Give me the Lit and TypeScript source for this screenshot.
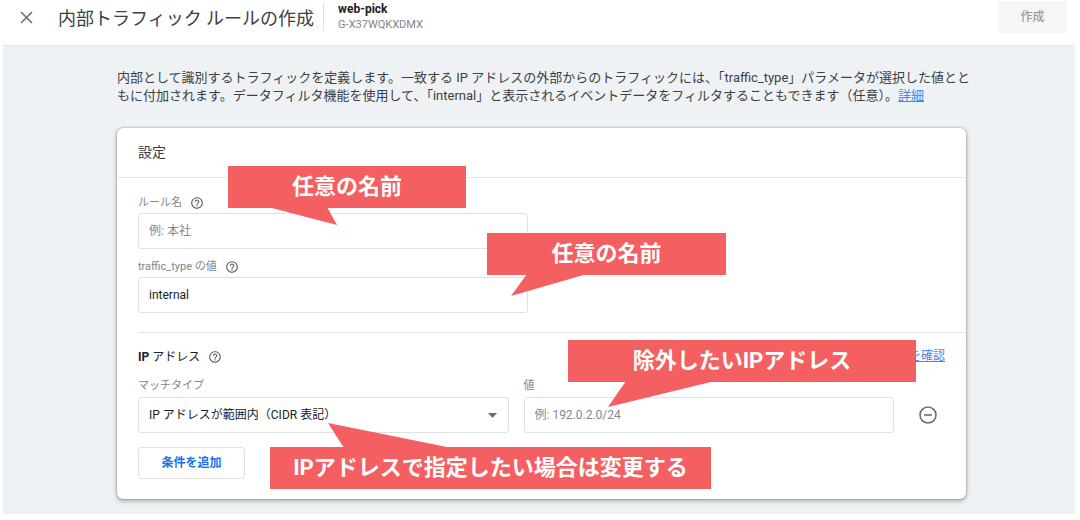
import { LitElement, html, css, svg } from "lit";
import { customElement, property } from "lit/decorators.js";

@customElement("help-button")
class HelpButton extends LitElement {
  @property() label = "ヘルプ";

  static styles = css`
    :host {
      display: inline-flex;
    }
    .help {
      display: flex;
      padding: 0;
      border: 0;
      background: none;
      color: #5f6368;
      cursor: pointer;
    }
  `;

  render() {
    return html`<button class="help" type="button" aria-label=${this.label}>
      <svg width="14" height="14" viewBox="0 0 24 24" fill="currentColor" aria-hidden="true">
        <path d="M11 18h2v-2h-2v2zm1-16C6.48 2 2 6.48 2 12s4.480 10 10 10 10-4.480 10-10S17.520 2 12 2zm0 18c-4.410 0-8-3.590-8-8s3.590-8 8-8 8 3.590 8 8-3.590 8-8 8zm0-14c-2.210 0-4 1.790-4 4h2c0-1.100.9-2 2-2s2 .9 2 2c0 2-3 1.750-3 5h2c0-2.250 3-2.500 3-5 0-2.210-1.790-4-4-4z"/>
      </svg>
    </button>`;
  }
}

@customElement("note-callout")
class NoteCallout extends LitElement {
  /** Tail outline, in pixels from the top left corner of the note. */
  @property() tail = "";

  static styles = css`
    :host {
      display: block;
      position: absolute;
      height: 42px;
      color: #fff;
      font-size: 22px;
      font-weight: 700;
      line-height: 42px;
      text-align: center;
      white-space: nowrap;
      background: #f45f61;
    }
    .tail {
      position: absolute;
      left: 0;
      top: 0;
      overflow: visible;
      pointer-events: none;
    }
  `;

  render() {
    return html`<svg class="tail" width="1" height="1" aria-hidden="true">
        ${svg`<polygon points=${this.tail} fill="#f45f61"></polygon>`}
      </svg>
      <slot></slot>`;
  }
}

@customElement("app-root")
class AppRoot extends LitElement {
  static styles = css`
    :host {
      display: block;
      padding: 0 5px 6px 3px;
      background: #fff;
      color: #3c4043;
      font-family: Roboto, "Noto Sans CJK JP", sans-serif;
      font-size: 12px;
      line-height: 18px;
    }
    * {
      box-sizing: border-box;
    }
    button,
    input,
    select {
      font: inherit;
    }
    a {
      color: #4285f4;
      text-decoration: underline;
    }
    .bar {
      display: flex;
      align-items: flex-start;
      height: 45px;
      padding: 0 8px 0 16px;
    }
    .close {
      display: flex;
      margin: 10px 24px 0 0;
      padding: 0;
      border: 0;
      background: none;
      color: #6b6e70;
    }
    .title {
      margin: 0;
      padding-top: 7px;
      font-size: 18px;
      font-weight: 400;
      line-height: 24px;
      white-space: nowrap;
    }
    .property {
      margin: 2px 0 0 9px;
      padding-left: 14px;
      border-left: 1px solid #dfe1e3;
      height: 29px;
    }
    .name,
    .id {
      margin: 0;
      line-height: 15px;
    }
    .name {
      color: #202124;
      font-weight: 700;
    }
    .id {
      color: #80868b;
      font-size: 11px;
    }
    .create {
      width: 69px;
      height: 32px;
      margin: 1px 0 0 auto;
      border: 0;
      border-radius: 3px;
      background: #f6f6f6;
      color: #9b9c9d;
      font-weight: 500;
    }
    .page {
      padding: 23px 109px 15px 114px;
      border-top: 1px solid #e3e7e9;
      background: #eef2f4;
    }
    .intro {
      margin: 0;
      font-size: 13px;
      white-space: nowrap;
    }
    .card {
      position: relative;
      margin-top: 23px;
      border-radius: 6px;
      background: #fff;
      box-shadow: 0 0 2px rgba(0, 0, 0, 0.4), 0 2px 5px rgba(0, 0, 0, 0.3);
    }
    .heading {
      margin: 0;
      padding: 14px 21px 15px;
      border-bottom: 1px solid #e6e7e8;
      font-size: 14px;
      font-weight: 400;
      line-height: 20px;
    }
    .basics {
      display: grid;
      row-gap: 10px;
      margin-left: 21px;
      padding: 17px 16px 19px 0;
      border-bottom: 1px solid #e6e7e8;
    }
    .field {
      display: grid;
      row-gap: 2px;
    }
    .basics .field {
      width: 48%;
    }
    .caption {
      display: flex;
      align-items: center;
      gap: 8px;
      height: 18px;
      color: #80868b;
      font-size: 11px;
    }
    .basics .caption {
      height: 16px;
    }
    .box {
      width: 100%;
      min-width: 0;
      height: 36px;
      padding: 0 10px;
      border: 1px solid #dfe1e3;
      border-radius: 3px;
      background: #fff;
      color: #202124;
      outline: 0;
    }
    .box::placeholder {
      color: #85898d;
      opacity: 1;
    }
    .addresses {
      padding: 14px 21px 20px;
    }
    .row {
      display: flex;
      align-items: flex-start;
      justify-content: space-between;
    }
    .subheading {
      display: flex;
      align-items: center;
      gap: 8px;
      margin: 0;
      color: #202124;
      font-size: 12px;
      font-weight: 400;
      line-height: 20px;
    }
    .latin {
      font-weight: 700;
    }
    .condition {
      display: grid;
      grid-template-columns: 1fr 1fr 28px;
      column-gap: 15px;
      align-items: end;
      margin: 10px 8px 14px 0;
    }
    .picker {
      display: grid;
      align-items: center;
    }
    .picker > * {
      grid-area: 1 / 1;
    }
    .select {
      appearance: none;
    }
    .arrow {
      justify-self: end;
      margin-right: 12px;
      pointer-events: none;
    }
    .remove {
      display: flex;
      align-items: center;
      justify-content: end;
      height: 36px;
      padding: 0;
      border: 0;
      background: none;
      color: #6b6e70;
    }
    .add {
      width: 107px;
      height: 32px;
      padding: 0;
      border: 1px solid #dfe1e3;
      border-radius: 3px;
      background: #fff;
      color: #1a73e8;
      font-weight: 700;
    }
    .note-rule {
      left: 111px;
      top: 38px;
      width: 238px;
    }
    .note-value {
      left: 370px;
      top: 105px;
      width: 239px;
    }
    .note-address {
      left: 451px;
      top: 212px;
      width: 348px;
    }
    .note-match {
      left: 153px;
      top: 319px;
      width: 441px;
    }
  `;

  render() {
    return html`
      <header class="bar">
        <button class="close" type="button" aria-label="閉じる">
          <svg width="15" height="15" viewBox="0 0 15 15" fill="none" stroke="currentColor" stroke-width="1.6" aria-hidden="true">
            <path d="M2 2l11 11M13 2L2 13" />
          </svg>
        </button>
        <h1 class="title">内部トラフィック ルールの作成</h1>
        <div class="property">
          <p class="name">web-pick</p>
          <p class="id">G-X37WQKXDMX</p>
        </div>
        <button class="create" type="button" disabled>作成</button>
      </header>
      <main class="page">
        <p class="intro">
          内部として識別するトラフィックを定義します。一致する IP アドレスの外部からのトラフィックには、「traffic_type」パラメータが選択した値とと<br />もに付加されます。データフィルタ機能を使用して、「internal」と表示されるイベントデータをフィルタすることもできます（任意）。<a href="#">詳細</a>
        </p>
        <section class="card">
          <h2 class="heading">設定</h2>
          <div class="basics">
            <div class="field">
              <div class="caption">
                <label for="rule">ルール名</label>
                <help-button label="ルール名のヘルプ"></help-button>
              </div>
              <input class="box" id="rule" type="text" placeholder="例: 本社" />
            </div>
            <div class="field">
              <div class="caption">
                <label for="traffic">traffic_type の値</label>
                <help-button label="traffic_type のヘルプ"></help-button>
              </div>
              <input class="box" id="traffic" type="text" value="internal" />
            </div>
          </div>
          <div class="addresses">
            <div class="row">
              <h3 class="subheading">
                <span><span class="latin">IP</span> アドレス</span>
                <help-button label="IP アドレスのヘルプ"></help-button>
              </h3>
              <a href="#">IP アドレスを確認</a>
            </div>
            <div class="condition">
              <div class="field">
                <label class="caption" for="match">マッチタイプ</label>
                <div class="picker">
                  <select class="box select" id="match">
                    <option>IP アドレスが範囲内（CIDR 表記）</option>
                  </select>
                  <svg class="arrow" width="9" height="5" viewBox="0 0 9 5" aria-hidden="true">
                    <path d="M0 0h9L4.500 5z" fill="#6b6e70" />
                  </svg>
                </div>
              </div>
              <div class="field">
                <label class="caption" for="value">値</label>
                <input class="box" id="value" type="text" placeholder="例: 192.0.2.0/24" />
              </div>
              <button class="remove" type="button" aria-label="条件を削除">
                <svg width="18" height="18" viewBox="0 0 18 18" fill="none" stroke="currentColor" stroke-width="1.6" aria-hidden="true">
                  <circle cx="9" cy="9" r="8" />
                  <path d="M5 9h8" />
                </svg>
              </button>
            </div>
            <button class="add" type="button">条件を追加</button>
          </div>
          <note-callout class="note-rule" tail="40,41 99,41 109,59">任意の名前</note-callout>
          <note-callout class="note-value" tail="40,41 100,41 24,63">任意の名前</note-callout>
          <note-callout class="note-address" tail="58,41 147,41 40,67">除外したいIPアドレス</note-callout>
          <note-callout class="note-match" tail="74,1 182,1 58,-24">IPアドレスで指定したい場合は変更する</note-callout>
        </section>
      </main>
    `;
  }
}
